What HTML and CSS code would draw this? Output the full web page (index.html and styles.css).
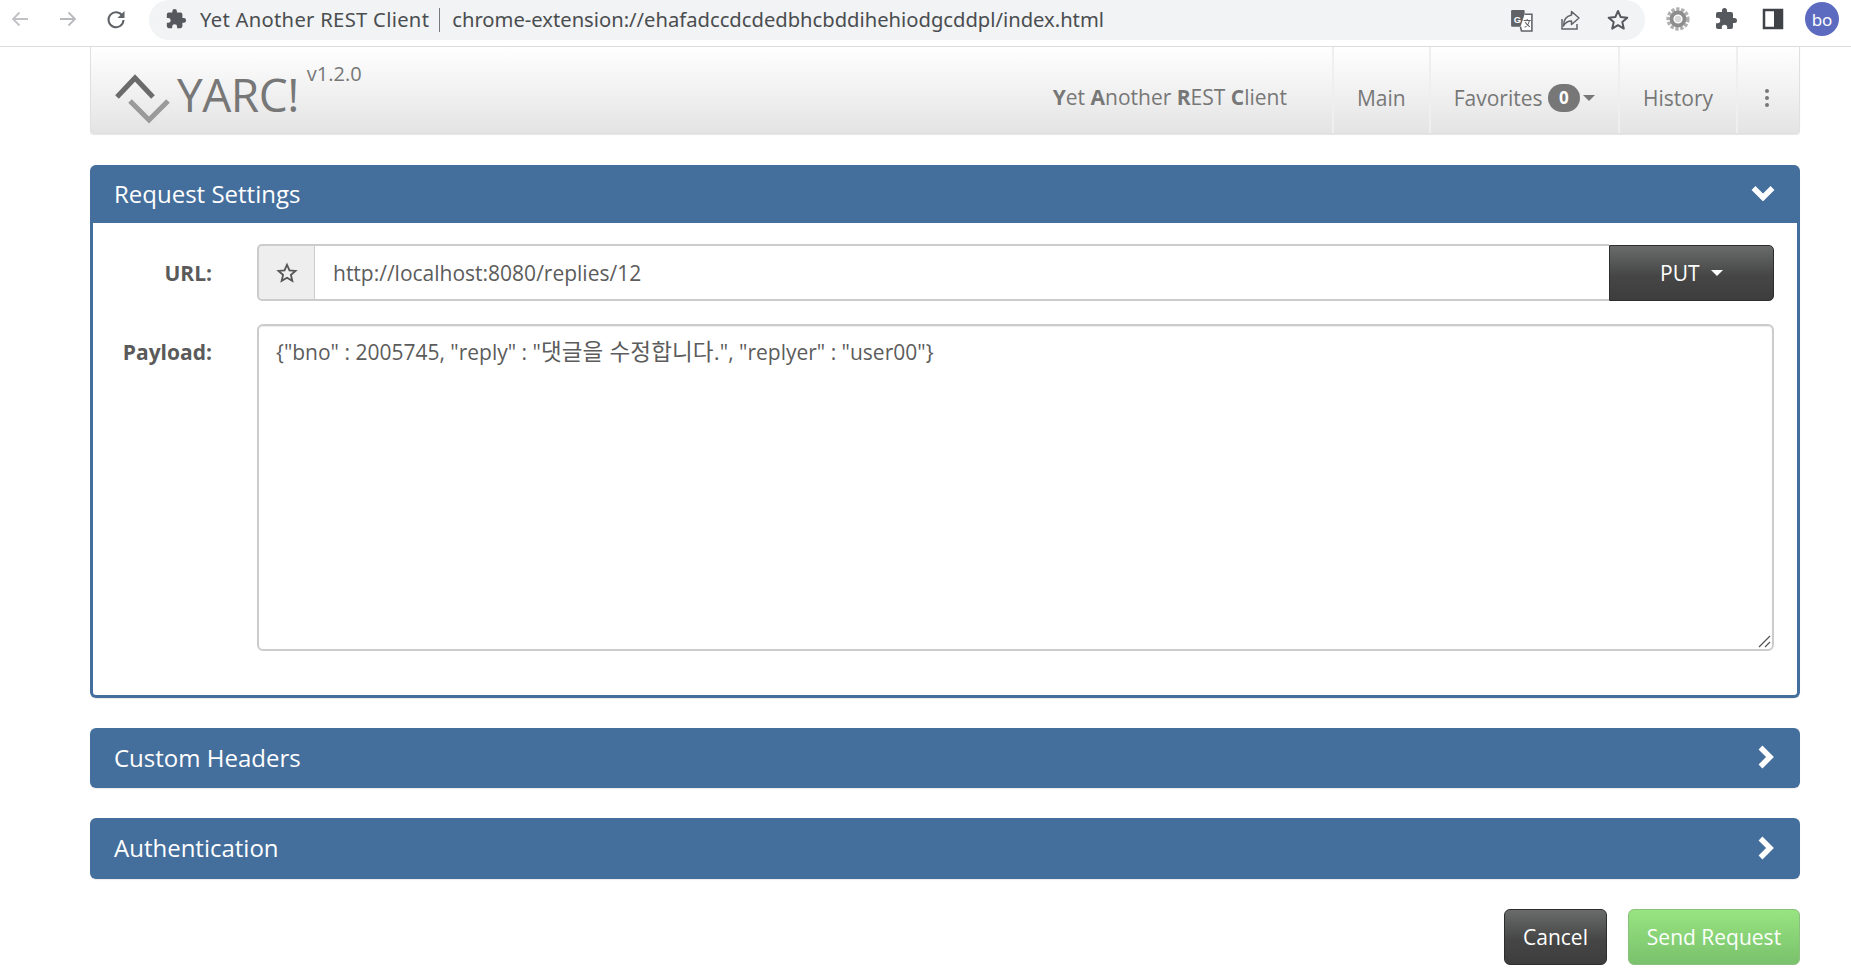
FILE: index.html
```html
<!DOCTYPE html>
<html lang="en">
<head>
<meta charset="utf-8">
<title>Yet Another REST Client</title>
<link rel="stylesheet" href="styles.css">
</head>
<body>
<header class="chrome">
  <svg class="ci back" viewBox="0 0 24 24" width="24" height="24"><path d="M20 12H5M11.5 5.5 5 12l6.500 6.500" fill="none" stroke="#c0c2c5" stroke-width="1.800"/></svg>
  <svg class="ci fwd" viewBox="0 0 24 24" width="24" height="24"><path d="M4 12h15M12.500 5.500 19 12l-6.500 6.500" fill="none" stroke="#b8babd" stroke-width="1.800"/></svg>
  <svg class="ci reload" viewBox="0 0 24 24" width="24" height="24"><path d="M18.500 9A7.500 7.500 0 1 0 19.500 13" fill="none" stroke="#5f6368" stroke-width="2"/><path d="M20.500 4v7h-7z" fill="#5f6368"/></svg>
  <div class="omni">
    <svg class="puzzle" viewBox="0 0 24 24" width="22" height="22"><path d="M20.500 11H19V7a2 2 0 0 0-2-2h-4V3.500a2.500 2.500 0 0 0-5 0V5H4a2 2 0 0 0-2 2v3.800h1.500a2.700 2.700 0 0 1 0 5.400H2V20a2 2 0 0 0 2 2h3.800v-1.500a2.700 2.700 0 0 1 5.400 0V22H17a2 2 0 0 0 2-2v-4h1.500a2.500 2.500 0 0 0 0-5z" fill="#55585d"/></svg>
    <span class="omni-title">Yet Another REST Client</span>
    <span class="omni-sep"></span>
    <span class="omni-url">chrome-extension://ehafadccdcdedbhcbddihehiodgcddpl/index.html</span>
    <span class="omni-icons">
      <svg viewBox="0 0 24 24" width="25" height="25"><rect x="2" y="2" width="13" height="16" rx="1" fill="#5f6368"/><path d="M15 6h7v16H12l-1-4" fill="#fff" stroke="#5f6368" stroke-width="1.500"/><text x="4.500" y="14" class="g-letter">G</text><path d="M14 12h7M17.500 10.500V12M15 18.500c2.500-1 4-3.500 4.500-6.500M15.500 13.500c1 2 2.500 3.500 4.500 4.500" fill="none" stroke="#5f6368" stroke-width="1"/></svg>
      <svg viewBox="0 0 24 24" width="24" height="24"><path d="M4 11v10h15v-5" fill="none" stroke="#5f6368" stroke-width="1.500"/><path d="M13.500 3.500 21 10l-7.500 6.500V13C9.500 13 7 15 5.500 18c0-6 3-10 8-11z" fill="none" stroke="#5f6368" stroke-width="1.500" stroke-linejoin="round"/></svg>
      <svg viewBox="0 0 24 24" width="24" height="24"><path d="m12 3 2.700 6.100 6.600.6-5 4.400 1.500 6.500L12 17.200l-5.800 3.400 1.500-6.500-5-4.400 6.600-.6z" fill="none" stroke="#55585d" stroke-width="2" stroke-linejoin="round"/></svg>
    </span>
  </div>
  <div class="ext-icons">
    <svg viewBox="0 0 24 24" width="26" height="26"><circle cx="12" cy="12" r="9" fill="none" stroke="#b0b0b0" stroke-width="3.500" stroke-dasharray="3 1.500"/><circle cx="12" cy="12" r="6" fill="none" stroke="#8d8d8d" stroke-width="3.500"/><circle cx="12" cy="12" r="3" fill="#d8d8d8"/></svg>
    <svg viewBox="0 0 24 24" width="24" height="24"><path d="M20.500 11H19V7a2 2 0 0 0-2-2h-4V3.500a2.500 2.500 0 0 0-5 0V5H4a2 2 0 0 0-2 2v3.800h1.500a2.700 2.700 0 0 1 0 5.400H2V20a2 2 0 0 0 2 2h3.800v-1.500a2.700 2.700 0 0 1 5.400 0V22H17a2 2 0 0 0 2-2v-4h1.500a2.500 2.500 0 0 0 0-5z" fill="#55585d"/></svg>
    <svg viewBox="0 0 24 24" width="24" height="24"><path d="M3 3h18v18H3z" fill="#fff" stroke="#3f4246" stroke-width="2.500"/><path d="M13 3h8v18h-8z" fill="#3f4246"/></svg>
    <span class="avatar">bo</span>
  </div>
</header>

<div class="page">
  <nav class="navbar">
    <a class="brand">
      <svg class="logo" viewBox="0 0 56 52" width="56" height="52"><path d="M2 23 20 4l18 19" fill="none" stroke="#6b6b6b" stroke-width="5"/><path d="M15 27l19 19 19-19" fill="none" stroke="#9a9a9a" stroke-width="5"/></svg>
      <span class="brand-name">YARC!</span>
      <span class="version">v1.2.0</span>
    </a>
    <span class="tagline"><b>Y</b>et <b>A</b>nother <b>R</b>EST <b>C</b>lient</span>
    <ul class="nav-links">
      <li>Main</li>
      <li>Favorites <span class="badge">0</span><i class="caret"></i></li>
      <li>History</li>
      <li class="more"><span class="dots"><i></i><i></i><i></i></span></li>
    </ul>
  </nav>

  <section class="panel open">
    <h2 class="panel-head">Request Settings
      <svg viewBox="0 0 24 16" width="24" height="16"><path d="M2.500 3 12 12.500 21.500 3" fill="none" stroke="#fff" stroke-width="5.500"/></svg>
    </h2>
    <div class="panel-body">
      <div class="row url-row">
        <label class="row-label">URL:</label>
        <div class="input-group">
          <span class="addon"><svg viewBox="0 0 24 24" width="22" height="22"><path d="m12 3 2.700 6.100 6.600.6-5 4.400 1.500 6.500L12 17.200l-5.800 3.400 1.500-6.500-5-4.400 6.600-.6z" fill="none" stroke="#555" stroke-width="2"/></svg></span>
          <span class="url-input">http://localhost:8080/replies/12</span>
          <span class="method">PUT <i class="caret white"></i></span>
        </div>
      </div>
      <div class="row payload-row">
        <label class="row-label">Payload:</label>
        <div class="textarea">{"bno" : 2005745, "reply" : "<span class="ko">댓글을 수정합니다.</span>", "replyer" : "user00"}
          <svg class="grip" viewBox="0 0 14 14" width="14" height="14"><path d="M2 13 13 2M8 13l5-5" stroke="#555" stroke-width="1.300" fill="none"/></svg>
        </div>
      </div>
    </div>
  </section>

  <section class="panel closed">
    <h2 class="panel-head">Custom Headers
      <svg viewBox="0 0 16 24" width="17" height="24"><path d="M3 2.500 12.500 12 3 21.500" fill="none" stroke="#fff" stroke-width="5.500"/></svg>
    </h2>
  </section>
  <section class="panel closed">
    <h2 class="panel-head">Authentication
      <svg viewBox="0 0 16 24" width="17" height="24"><path d="M3 2.500 12.500 12 3 21.500" fill="none" stroke="#fff" stroke-width="5.500"/></svg>
    </h2>
  </section>

  <div class="actions">
    <button class="btn btn-dark">Cancel</button>
    <button class="btn btn-green">Send Request</button>
  </div>
</div>
</body>
</html>
```
FILE: styles.css
```css
* { box-sizing: border-box; }
html, body { margin: 0; height: 100%; overflow: hidden; background: #fff; }
body { font-family: "Open Sans", "Noto Sans CJK KR", sans-serif; color: #555; }

.chrome { height: 47px; display: flex; align-items: flex-start; border-bottom: 1px solid #dcdcdc; background: #fff; font-family: "Noto Sans", "Open Sans", sans-serif; }
.ci { flex: none; margin-top: 7px; }
.back { margin-left: 8px; }
.fwd { margin-left: 24px; }
.reload { margin-left: 24px; }
.omni { margin-left: 21px; width: 1496px; height: 40px; border-radius: 20px; background: #f1f3f4; display: flex; align-items: center; padding: 0 0 2px 16px; font-size: 20.200px; color: #4a4d50; }
.omni-title { margin-left: 13px; letter-spacing: .3px; white-space: nowrap; }
.omni-sep { width: 1px; height: 24px; background: #77797c; margin: 2px 12px 0 10px; }
.omni-url { white-space: nowrap; }
.omni-icons { margin-left: auto; margin-right: 15px; margin-top: 2px; display: flex; gap: 24px; }
.g-letter { font-size: 9px; font-weight: 700; fill: #fff; font-family: "Liberation Sans", sans-serif; }
.ext-icons { display: flex; align-items: center; height: 38px; margin-left: 20px; gap: 23px; }
.avatar { width: 34px; height: 34px; border-radius: 50%; background: #5c6bc0; color: #fff; font-size: 17px; display: flex; align-items: center; justify-content: center; margin-left: -3px; flex: none; }

.page { padding: 0 51px 0 90px; }

.navbar { height: 87px; display: flex; align-items: stretch; border: 1px solid #e0e0e0; border-top: 0; border-radius: 0 0 4px 4px; background: linear-gradient(#fff, #e4e4e4); box-shadow: 0 1px 1px rgba(0,0,0,.1); }
.brand { display: flex; align-items: flex-start; margin-left: 24px; width: 300px; }
.logo { flex: none; margin-top: 27px; }
.brand-name { font-size: 46px; line-height: 54px; margin-top: 20px; margin-left: 6px; color: #777; letter-spacing: -.5px; }
.version { font-size: 20px; color: #777; margin-top: 13px; margin-left: 8px; }
.tagline { margin-left: auto; margin-right: 45px; font-size: 21px; line-height: 100px; color: #777; white-space: nowrap; }
.tagline b { font-weight: 700; }
.nav-links { list-style: none; margin: 0; padding: 0; display: flex; }
.nav-links li { display: flex; align-items: center; padding: 16px 23px 0; font-size: 21px; color: #777; border-left: 2px solid #efefef; white-space: pre; }
.nav-links .more { width: 63px; padding: 16px 0 0; justify-content: center; }
.badge { display: inline-block; min-width: 32px; height: 28px; padding: 0 6px; border-radius: 14px; background: #777; color: #fff; font-size: 17px; font-weight: 700; line-height: 27px; text-align: center; }
.caret { display: inline-block; width: 0; height: 0; margin-left: 3px; border-left: 6px solid transparent; border-right: 6px solid transparent; border-top: 6px solid #777; }
.caret.white { border-top-color: #fff; margin-left: 6px; }
.dots { display: flex; flex-direction: column; gap: 3px; margin-left: -4px; }
.dots i { width: 4px; height: 4px; border-radius: 50%; background: #777; }

.panel { margin-top: 30px; border-radius: 6px; background: #446e9b; box-shadow: 0 1px 1px rgba(0,0,0,.08); }
.panel-head { margin: 0; padding: 0 24px 2px; display: flex; align-items: center; justify-content: space-between; color: #fff; font-size: 24px; font-weight: 400; }
.open .panel-head { height: 58px; padding-right: 25px; }
.closed .panel-head { height: 60px; padding-right: 26px; }
.closed + .closed .panel-head { height: 61px; }
.open { margin-top: 31px; border: 3px solid #446e9b; border-top: 0; }
.open .panel-head { margin: 0 -3px; }
.panel-body { background: #fff; height: 472px; padding: 21px 23px 0 0; border-radius: 0 0 3px 3px; }
.row { display: grid; grid-template-columns: 164px 1fr; }
.row-label { font-size: 21px; font-weight: 700; text-align: right; padding-right: 45px; color: #5a5a5a; white-space: nowrap; }
.url-row .row-label { line-height: 59px; }
.payload-row { margin-top: 21px; }
.payload-row .row-label { line-height: 56px; }
.input-group { display: flex; height: 57px; }
.addon { width: 58px; flex: none; display: flex; align-items: center; justify-content: center; background: #eee; border: 2px solid #ccc; border-right: 1px solid #ccc; border-radius: 5px 0 0 5px; }
.url-input { flex: 1; display: flex; align-items: center; padding-left: 18px; font-size: 21px; color: #5c5c5c; border: 2px solid #ccc; border-left: 0; border-right: 0; }
.method { width: 165px; flex: none; margin-top: 1px; display: flex; align-items: center; justify-content: center; background: linear-gradient(#6a6c6c, #454645 55%, #3c3d3c); border: 1px solid #2d2d2d; border-radius: 0 5px 5px 0; color: #fff; font-size: 21px; white-space: pre; }
.textarea { position: relative; height: 327px; padding: 12px 17px; font-size: 21px; line-height: 28px; color: #5c5c5c; border: 2px solid #ccc; border-radius: 6px; box-shadow: inset 0 1px 1px rgba(0,0,0,.075); white-space: nowrap; }
.ko { font-size: 22.500px; letter-spacing: .15px; }
.grip { position: absolute; right: 1px; bottom: 1px; }

.actions { margin-top: 30px; display: flex; justify-content: flex-end; gap: 21px; }
.btn { height: 56px; border-radius: 6px; font: 400 21px "Open Sans", sans-serif; color: #fff; padding: 0; }
.btn-dark { width: 103px; background: linear-gradient(#6a6c6c, #454645 55%, #3c3d3c); border: 1px solid #2d2d2d; }
.btn-green { width: 172px; background: linear-gradient(#98e481, #79c16c); border: 1px solid #8cc07e; color: #fbfffa; }
```
